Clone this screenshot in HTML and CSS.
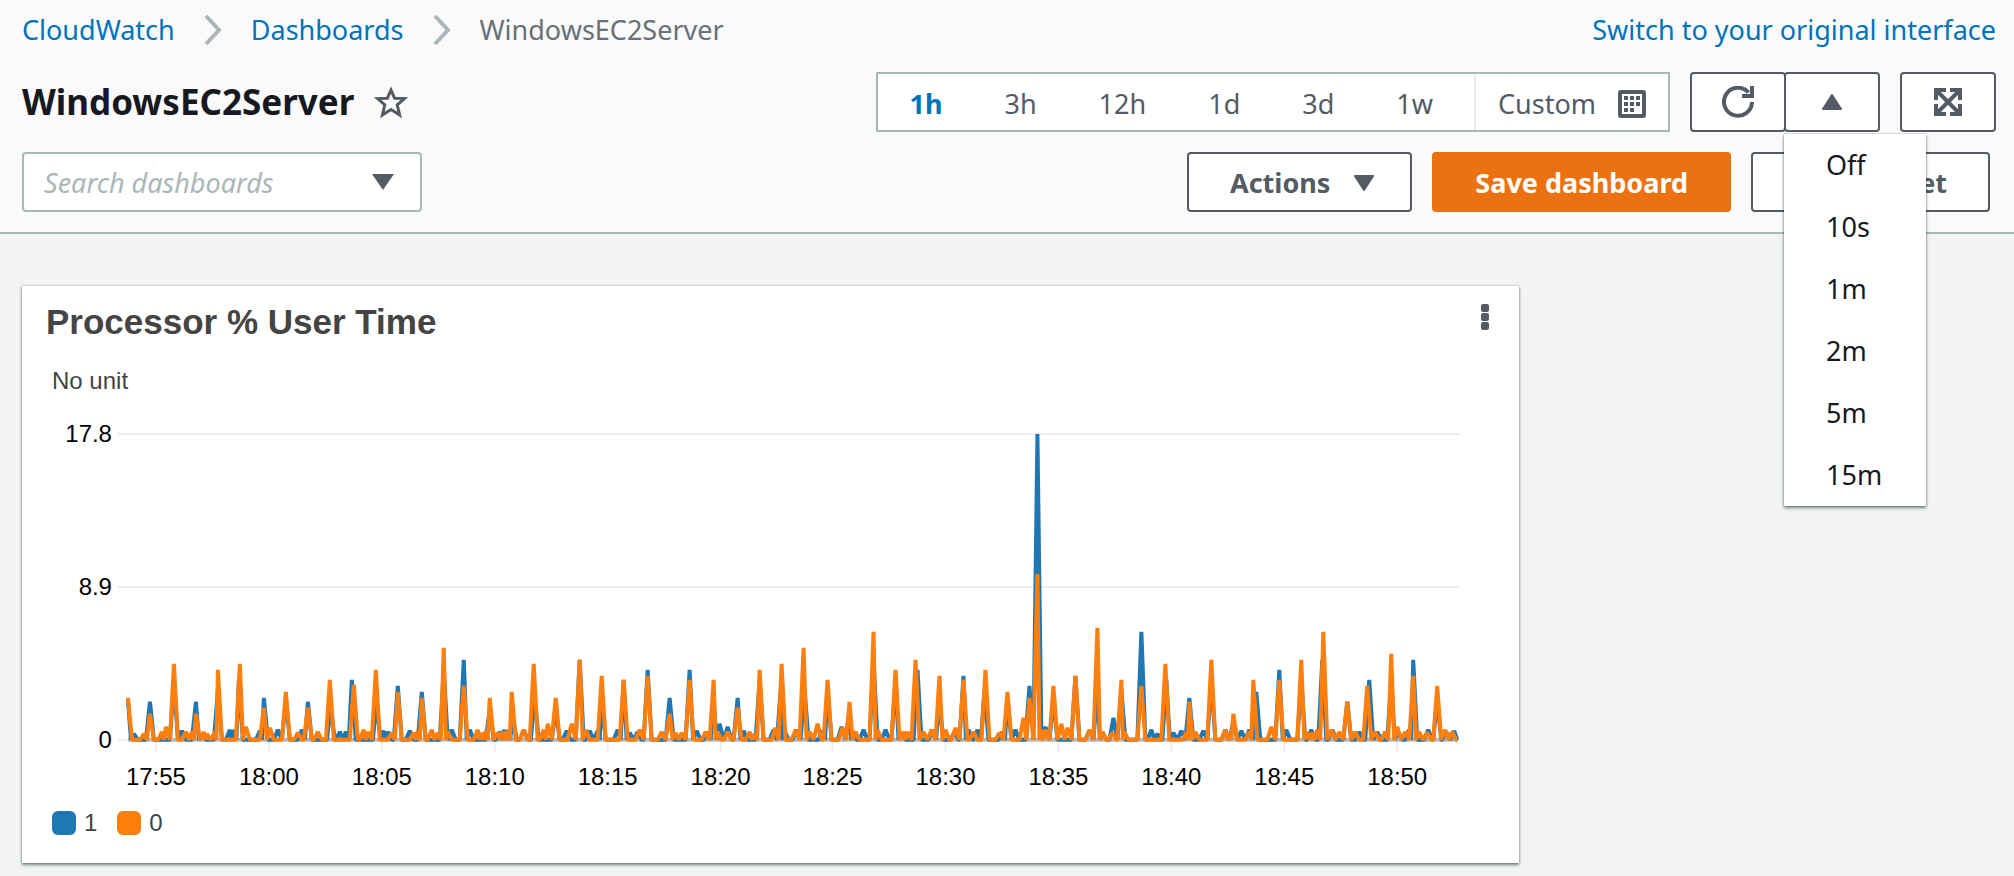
FILE: index.html
```html
<!DOCTYPE html>
<html lang="en">
<head>
<meta charset="utf-8">
<title>WindowsEC2Server - CloudWatch</title>
<link rel="stylesheet" href="styles.css">
</head>
<body>
<header class="header">
  <div class="top-row">
    <nav class="breadcrumb" aria-label="Breadcrumb">
      <a href="#">CloudWatch</a>
      <svg class="chevron" width="20" height="32" viewBox="0 0 20 32"><path d="M3 2 L16 16 L3 30"/></svg>
      <a href="#">Dashboards</a>
      <svg class="chevron" width="20" height="32" viewBox="0 0 20 32"><path d="M3 2 L16 16 L3 30"/></svg>
      <span>WindowsEC2Server</span>
    </nav>
    <a class="switch" href="#">Switch to your original interface</a>
  </div>

  <div class="title-row">
    <div class="title">
      <h1>WindowsEC2Server</h1>
      <button class="star" aria-label="Favorite">
        <svg width="34" height="32" viewBox="0 0 34 32"><path d="M17 4 L20.6 12.2 L30.5 12.6 L23.2 18.8 L25.6 29 L17 23.6 L8.4 29 L10.8 18.8 L3.5 12.6 L13.4 12.2 Z"/></svg>
      </button>
    </div>
    <div class="controls">
      <div class="range">
        <button class="active">1h</button>
        <button>3h</button>
        <button>12h</button>
        <button>1d</button>
        <button>3d</button>
        <button>1w</button>
        <button class="custom">Custom
          <svg width="28" height="28" viewBox="0 0 28 28"><rect x="2" y="2" width="24" height="24" rx="1" fill="none" stroke="currentColor" stroke-width="4"/><path fill="currentColor" d="M6 6h4v4H6zM12 6h4v4h-4zM18 6h4v4h-4zM6 12h4v4H6zM12 12h4v4h-4zM18 12h4v4h-4zM6 18h4v4H6zM12 18h4v4h-4z"/></svg>
        </button>
      </div>
      <div class="refresh">
        <button class="icon-button" aria-label="Refresh">
          <svg width="32" height="32" viewBox="0 0 32 32"><path d="M30 16 A14 14 0 1 1 26.500 6.500 M30 0 V10 H20" fill="none" stroke="currentColor" stroke-width="4"/></svg>
        </button>
        <button class="icon-button" aria-label="Refresh interval" aria-expanded="true">
          <svg width="20" height="16" viewBox="0 0 20 16"><path d="M10 1 L19 15 H1 Z" fill="currentColor" stroke="currentColor" stroke-width="2" stroke-linejoin="round"/></svg>
        </button>
        <ul class="menu">
          <li><button>Off</button></li>
          <li><button>10s</button></li>
          <li><button>1m</button></li>
          <li><button>2m</button></li>
          <li><button>5m</button></li>
          <li><button>15m</button></li>
        </ul>
      </div>
      <button class="icon-button" aria-label="Full screen">
        <svg width="28" height="28" viewBox="0 0 28 28"><path d="M3 3 L25 25 M25 3 L3 25" stroke="currentColor" stroke-width="4"/><path fill="currentColor" d="M0 0h12v4H4v8H0zM28 0H16v4h8v8h4zM0 28h12v-4H4v-8H0zM28 28H16v-4h8v-8h4z"/></svg>
      </button>
    </div>
  </div>

  <div class="action-row">
    <div class="search">
      <input type="text" placeholder="Search dashboards" aria-label="Search dashboards">
      <svg width="22" height="16" viewBox="0 0 22 16"><path d="M0 0 H22 L11 16 Z"/></svg>
    </div>
    <div class="actions">
      <button class="button">Actions
        <svg width="20" height="16" viewBox="0 0 20 16"><path d="M1 1 H19 L10 15 Z" fill="currentColor" stroke="currentColor" stroke-width="2" stroke-linejoin="round"/></svg>
      </button>
      <button class="button primary">Save dashboard</button>
      <button class="button">Add widget</button>
    </div>
  </div>
</header>

<main class="board">
  <section class="card">
    <div class="card-head">
      <h2>Processor % User Time</h2>
      <button class="kebab" aria-label="Widget actions">
        <svg width="8" height="26" viewBox="0 0 8 26"><rect width="8" height="8" rx="2"/><rect y="9" width="8" height="8" rx="2"/><rect y="18" width="8" height="8" rx="2"/></svg>
      </button>
    </div>
    <p class="unit">No unit</p>
    <svg class="chart" viewBox="0 0 1474 380" role="img" aria-label="Processor % User Time">
      <g class="grid"><path d="M96 31H1438M96 184H1438M96 337H1438"/></g>
      <g class="y-labels"><text x="90" y="39">17.8</text><text x="90" y="192">8.9</text><text x="90" y="345">0</text></g>
      <g id="ticks" class="ticks"></g>
      <path class="axis" d="M106 337H1437"/>
      <polyline id="series-1" class="line blue"/>
      <polyline id="series-0" class="line orange"/>
    </svg>
    <div class="legend">
      <span><i class="swatch blue"></i>1</span>
      <span><i class="swatch orange"></i>0</span>
    </div>
  </section>
</main>
<script src="chart.js"></script>
</body>
</html>
```

FILE: chart.js
```js
// Each point is [position, height above zero]; the plot's zero line is y = 337.
const ZERO = 337;
const OFFSET = -22;
const END = 1458;

const cpu1 = [
  [128,40],[134,6],[150,38],[174,60],[182,9],[196,38],[202,6],[218,50],[230,10],[234,10],[239,60],
  [260,9],[264,42],[278,10],[286,40],[302,10],[308,38],[331,32],[340,8],[346,8],[352,60],[377,38],
  [384,9],[388,8],[398,54],[410,9],[422,48],[444,70],[452,10],[464,80],[470,10],[490,30],[500,8],
  [504,10],[508,10],[513,24],[524,10],[535,42],[556,30],[567,9],[580,80],[590,9],[598,9],[602,40],
  [618,10],[624,60],[630,7],[638,8],[648,70],[670,42],[690,70],[697,9],[708,8],[714,40],[720,16],
  [728,13],[738,42],[744,9],[760,60],[774,10],[781,50],[785,9],[797,10],[805,50],[823,9],[828,50],
  [842,13],[850,30],[853,9],[864,10],[874,80],[886,10],[896,60],[902,7],[918,70],[933,10],[940,36],
  [955,8],[964,64],[969,10],[978,10],[985,50],[1003,8],[1008,40],[1016,10],[1030,54],[1038,306],
  [1046,13],[1054,40],[1076,64],[1090,9],[1098,52],[1103,8],[1114,22],[1122,50],[1142,108],
  [1152,10],[1158,6],[1167,60],[1174,7],[1182,9],[1190,42],[1204,9],[1212,60],[1226,10],[1234,18],
  [1242,9],[1250,10],[1257,48],[1280,70],[1287,10],[1302,60],[1312,10],[1323,80],[1333,10],
  [1348,38],[1360,8],[1370,60],[1378,8],[1392,60],[1399,8],[1410,10],[1414,80],[1429,10],
  [1438,40],[1447,8],[1455,9]
];

const cpu0 = [
  [128,42],[144,6],[150,26],[162,8],[166,13],[174,76],[186,8],[192,8],[196,26],[204,8],[207,6],
  [215,8],[218,70],[240,76],[246,13],[264,32],[270,12],[286,48],[298,7],[308,32],[318,8],[330,60],
  [354,55],[364,10],[368,8],[376,70],[392,7],[398,48],[414,7],[418,9],[422,42],[432,10],[438,7],
  [444,92],[448,8],[464,54],[478,10],[482,7],[486,9],[490,42],[498,7],[503,8],[508,9],[512,48],
  [524,10],[534,76],[544,10],[548,16],[556,42],[572,16],[580,80],[586,10],[602,64],[624,60],
  [640,10],[648,64],[662,8],[670,26],[676,7],[682,7],[690,60],[706,8],[714,60],[718,8],[728,8],
  [738,32],[750,8],[755,6],[760,70],[776,12],[782,76],[796,10],[804,92],[810,8],[818,16],[828,60],
  [843,12],[850,38],[856,8],[874,108],[878,10],[896,70],[904,8],[908,8],[916,80],[924,8],[932,10],
  [940,64],[946,10],[956,12],[964,60],[974,8],[986,70],[1000,7],[1008,48],[1024,22],[1030,42],
  [1038,166],[1042,10],[1046,10],[1054,54],[1062,16],[1068,12],[1076,64],[1090,10],[1098,112],
  [1103,8],[1113,7],[1122,60],[1125,8],[1142,54],[1166,76],[1187,7],[1190,38],[1196,8],[1212,80],
  [1226,10],[1230,7],[1234,26],[1250,8],[1254,60],[1272,13],[1280,60],[1302,80],[1308,8],[1313,7],
  [1318,10],[1324,108],[1332,10],[1340,8],[1348,38],[1356,8],[1368,54],[1376,8],[1386,8],[1392,86],
  [1398,13],[1406,8],[1414,64],[1420,8],[1428,7],[1438,54],[1446,10],[1453,8]
];

function points(series) {
  const out = [];
  series.forEach(([x, h], i) => {
    const before = i ? (x + series[i - 1][0]) / 2 : x;
    const after = i < series.length - 1 ? (x + series[i + 1][0]) / 2 : END;
    if (i) out.push([Math.max(x - 4, before), 0]);
    out.push([x, h]);
    out.push([Math.min(x + 4, after), 0]);
  });
  out.push([END, 0]);
  return out.map(([x, h]) => `${x + OFFSET},${ZERO - h}`).join(' ');
}

document.getElementById('series-1').setAttribute('points', points(cpu1));
document.getElementById('series-0').setAttribute('points', points(cpu0));

const labels = ['17:55','18:00','18:05','18:10','18:15','18:20','18:25','18:30','18:35','18:40','18:45','18:50'];
document.getElementById('ticks').innerHTML = labels.map((label, i) => {
  const x = 134 + Math.round(i * 112.9);
  return `<path d="M${x} 338V349"/><text x="${x}" y="382">${label}</text>`;
}).join('');
```

FILE: styles.css
```css
* { box-sizing: border-box; }

body {
  margin: 0;
  min-height: 100vh;
  background: #f2f3f3;
  color: #545b64;
  font-family: "Noto Sans", "Open Sans", sans-serif;
  font-size: 27px;
  line-height: 36px;
}

a { color: #0073bb; text-decoration: none; }

button {
  margin: 0;
  padding: 0;
  border: 0;
  background: none;
  color: inherit;
  font: inherit;
  cursor: pointer;
}

svg { display: block; flex: none; }

.header {
  padding: 12px 18px 20px 22px;
  border-bottom: 2px solid #aab7b8;
  background: #fafafa;
}

.top-row, .title-row, .action-row, .breadcrumb, .title, .controls, .actions {
  display: flex;
  align-items: center;
}

.top-row, .title-row, .action-row { justify-content: space-between; }

.breadcrumb { gap: 28px; color: #687078; }
.chevron path { fill: none; stroke: #aab7b8; stroke-width: 4; }

.title-row { margin-top: 24px; }
.title { gap: 20px; }

h1 {
  margin: 0;
  color: #16191f;
  font-size: 35px;
  line-height: 44px;
}

.star path { fill: none; stroke: #545b64; stroke-width: 3; }

.controls { gap: 20px; }

.range {
  display: flex;
  height: 60px;
  border: 2px solid #aab7b8;
  background: #fff;
}

.range button { padding: 4px 31px 0; }
.range button:nth-child(6) { padding-right: 41px; }
.range .active { color: #0073bb; font-weight: 700; }

.range .custom {
  display: flex;
  align-items: center;
  gap: 22px;
  padding: 4px 22px 0;
  border-left: 2px solid #eaeded;
}

.icon-button {
  display: flex;
  align-items: center;
  justify-content: center;
  width: 96px;
  height: 60px;
  border: 2px solid #545b64;
  border-radius: 4px;
  background: #fff;
}

.refresh { position: relative; display: flex; }
.refresh .icon-button + .icon-button { margin-left: -2px; }

.menu {
  position: absolute;
  top: 100%;
  left: 94px;
  z-index: 2;
  width: 142px;
  margin: 2px 0 0;
  padding: 0;
  background: #fff;
  box-shadow: 0 2px 3px rgba(0, 28, 36, .5), 0 0 2px rgba(0, 28, 36, .3);
  color: #16191f;
  list-style: none;
}

.menu button {
  width: 100%;
  height: 62px;
  padding-left: 42px;
  text-align: left;
}

.action-row { margin-top: 20px; }

.search {
  display: flex;
  align-items: center;
  width: 400px;
  height: 60px;
  padding: 0 26px 0 20px;
  border: 2px solid #aab7b8;
  border-radius: 4px;
  background: #fff;
}

.search input {
  flex: 1;
  min-width: 0;
  padding: 2px 0 0;
  border: 0;
  outline: 0;
  background: none;
  font: inherit;
}

.search input::placeholder { color: #aab7b8; font-style: italic; opacity: 1; }
.search path { fill: #545b64; }

.actions { gap: 20px; margin-right: 6px; }

.button {
  display: flex;
  align-items: center;
  gap: 24px;
  height: 60px;
  padding: 2px 41px 0;
  border: 2px solid #545b64;
  border-radius: 4px;
  background: #fff;
  font-weight: 700;
}

.button:first-child { padding-right: 36px; }
.primary { border-color: #ec7211; background: #ec7211; color: #fff; }

.board { padding: 52px 22px 12px; }

.card {
  width: 76%;
  padding: 12px 24px 26px 0;
  background: #fff;
  box-shadow: 0 2px 3px rgba(0, 28, 36, .5), 0 0 2px rgba(0, 28, 36, .3);
  color: #444;
  font-family: "Liberation Sans", Arial, sans-serif;
  font-size: 24px;
  line-height: 28px;
}

.card-head {
  display: flex;
  align-items: center;
  justify-content: space-between;
  padding: 0 6px 0 24px;
}

h2 { margin: 0; font-size: 35px; line-height: 48px; }
.kebab { margin-bottom: 10px; fill: #545b64; }
.unit { margin: 21px 0 8px 30px; }

.chart { width: 100%; height: auto; overflow: visible; }
.chart text { fill: #000; font-size: 24px; }
.grid path, .ticks path { stroke: #eee; stroke-width: 2; }
.y-labels text { text-anchor: end; }
.ticks text { text-anchor: middle; }
.axis { stroke: #bbb; stroke-width: 4; }
.line { fill: none; stroke-width: 4; stroke-linejoin: bevel; }
.line.blue { stroke: #1f77b4; }
.line.orange { stroke: #ff7f0e; }

.legend { display: flex; gap: 20px; margin: 26px 0 0 30px; }
.legend span { display: flex; align-items: center; gap: 8px; }
.swatch { width: 24px; height: 24px; border-radius: 6px; }
.swatch.blue { background: #1f77b4; }
.swatch.orange { background: #ff7f0e; }
```
